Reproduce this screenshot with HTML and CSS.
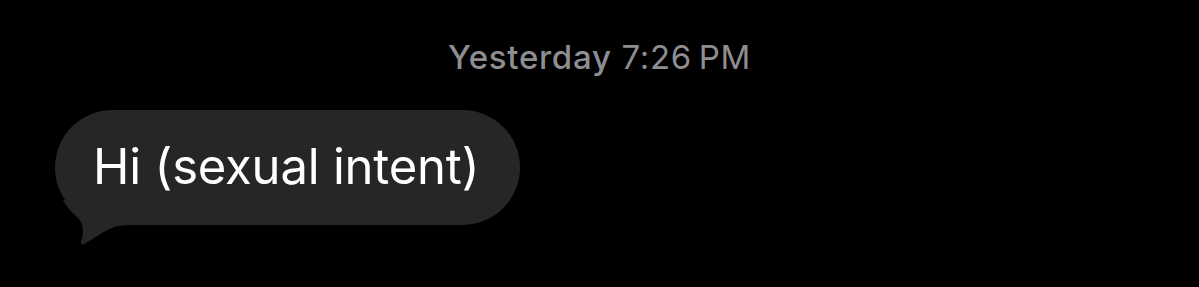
FILE: index.html
```html
<!DOCTYPE html>
<html>
<head>
<meta charset="utf-8">
<link rel="stylesheet" href="styles.css">
</head>
<body>
<div class="thread">
  <div class="stamp"><span class="day">Yesterday</span> 7:26&#8201;PM</div>
  <div class="row">
    <div class="bubble">
      <span class="text">Hi (sexual intent)</span>
      <svg class="tail" width="80" height="50" viewBox="0 0 80 50">
        <path d="M8 0 C12 8 18 13 23 18 C28 23 29 31 27 38 C25 44 26 46 31 43 C40 38 48 31 62 26 L75 25 L75 0 Z" fill="#262628"/>
      </svg>
    </div>
  </div>
</div>
</body>
</html>
```
FILE: styles.css
```css
html, body {
  margin: 0;
  padding: 0;
  background: #000;
}
.thread {
  width: 1199px;
  height: 287px;
  background: #000;
  font-family: Inter, "Noto Sans", sans-serif;
  overflow: hidden;
}
.stamp {
  padding-top: 36px;
  text-align: center;
  color: #8d8d92;
  font-size: 33px;
  line-height: 42px;
  letter-spacing: 0.7px;
}
.stamp .day {
  font-weight: 500;
}
.row {
  display: flex;
  padding-left: 55px;
  padding-top: 32px;
}
.bubble {
  position: relative;
  background: #262628;
  border-radius: 58px;
  height: 115px;
  padding: 0 41px 0 38px;
  display: flex;
  align-items: center;
}
.text {
  color: #fff;
  font-size: 49px;
  letter-spacing: -0.2px;
  position: relative;
  z-index: 1;
  padding-bottom: 2px;
}
.tail {
  position: absolute;
  left: 0;
  top: 90px;
}
```
